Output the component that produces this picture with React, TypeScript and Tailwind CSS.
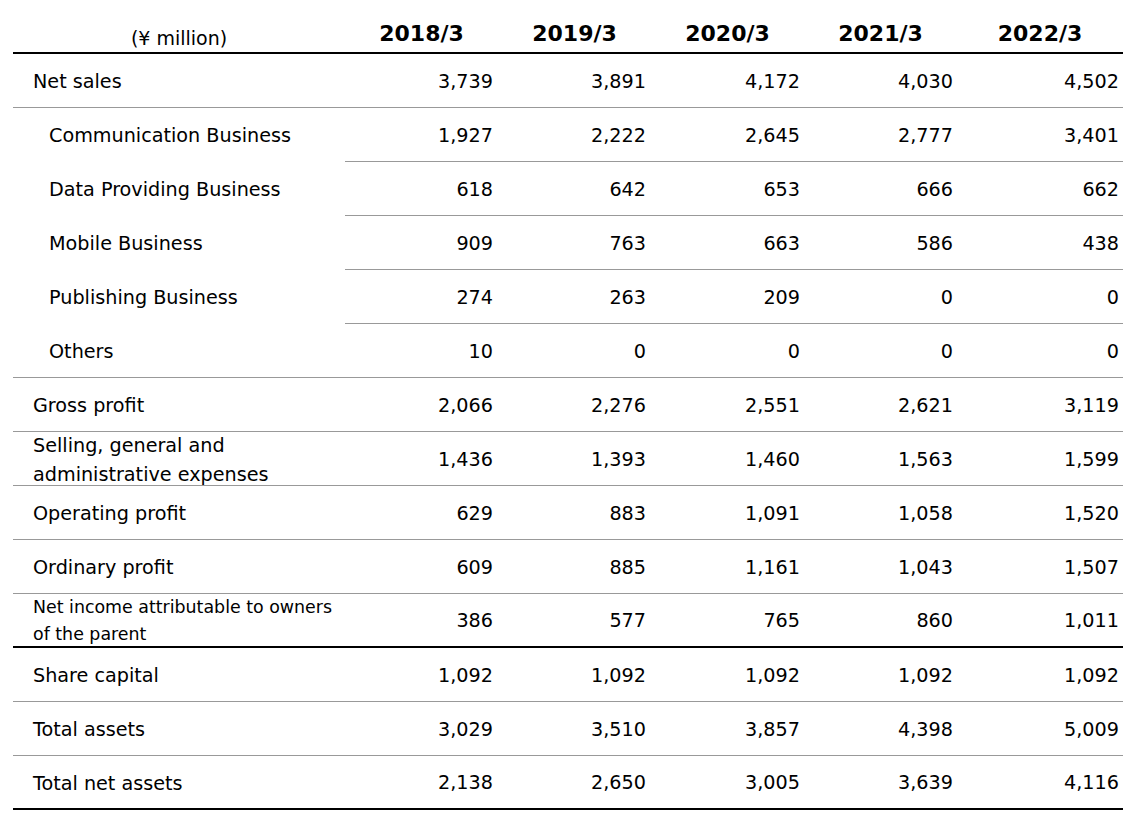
import React from "react";

type Row = {
  label: string;
  values: string[];
  indent?: boolean;
  small?: boolean;
  labelBorder?: boolean;
  thick?: boolean;
};

const rows: Row[] = [
  { label: "Net sales", values: ["3,739", "3,891", "4,172", "4,030", "4,502"], labelBorder: true },
  { label: "Communication Business", values: ["1,927", "2,222", "2,645", "2,777", "3,401"], indent: true },
  { label: "Data Providing Business", values: ["618", "642", "653", "666", "662"], indent: true },
  { label: "Mobile Business", values: ["909", "763", "663", "586", "438"], indent: true },
  { label: "Publishing Business", values: ["274", "263", "209", "0", "0"], indent: true },
  { label: "Others", values: ["10", "0", "0", "0", "0"], indent: true, labelBorder: true },
  { label: "Gross profit", values: ["2,066", "2,276", "2,551", "2,621", "3,119"], labelBorder: true },
  { label: "Selling, general and\nadministrative expenses", values: ["1,436", "1,393", "1,460", "1,563", "1,599"], labelBorder: true },
  { label: "Operating profit", values: ["629", "883", "1,091", "1,058", "1,520"], labelBorder: true },
  { label: "Ordinary profit", values: ["609", "885", "1,161", "1,043", "1,507"], labelBorder: true },
  { label: "Net income attributable to owners\nof the parent", values: ["386", "577", "765", "860", "1,011"], labelBorder: true, small: true, thick: true },
  { label: "Share capital", values: ["1,092", "1,092", "1,092", "1,092", "1,092"], labelBorder: true },
  { label: "Total assets", values: ["3,029", "3,510", "3,857", "4,398", "5,009"], labelBorder: true },
  { label: "Total net assets", values: ["2,138", "2,650", "3,005", "3,639", "4,116"], labelBorder: true, thick: true },
];

const years = ["2018/3", "2019/3", "2020/3", "2021/3", "2022/3"];

export default function App() {
  return (
    <div
      className="w-[1145px] h-[831px] bg-white text-black"
      style={{ fontFamily: '"DejaVu Sans", Verdana, sans-serif' }}
    >
      <div className="ml-[13px] w-[1110px] grid grid-cols-[332px_153px_153px_153px_153px_166px]">
        <div className="h-[54px] border-b-2 border-black flex items-end justify-center pb-[1px] text-[19px] leading-[26px]">
          (¥ million)
        </div>
        {years.map((y) => (
          <div
            key={y}
            className="h-[54px] border-b-2 border-black flex items-end justify-center pb-[5px] text-[22px] leading-[26px] font-bold"
          >
            {y}
          </div>
        ))}
        {rows.map((r) => {
          const bottom = r.thick
            ? "border-b-2 border-black"
            : "border-b border-[#999999]";
          const labelBottom = r.thick
            ? "border-b-2 border-black"
            : r.labelBorder
            ? "border-b border-[#999999]"
            : "border-b border-transparent";
          return (
            <React.Fragment key={r.label}>
              <div
                className={`h-[54px] pt-[2px] flex items-center whitespace-pre-line ${labelBottom} ${
                  r.indent ? "pl-[36px]" : "pl-[20px]"
                } ${r.small ? "text-[17.4px] leading-[27px]" : "text-[19.2px] leading-[29px]"}`}
              >
                {r.label}
              </div>
              {r.values.map((v, i) => (
                <div
                  key={i}
                  className={`h-[54px] pt-[2px] flex items-center justify-end text-[19.2px] leading-[26px] ${bottom} ${
                    i >= 2 ? "pr-[4px]" : "pr-[5px]"
                  }`}
                >
                  {v}
                </div>
              ))}
            </React.Fragment>
          );
        })}
      </div>
    </div>
  );
}
